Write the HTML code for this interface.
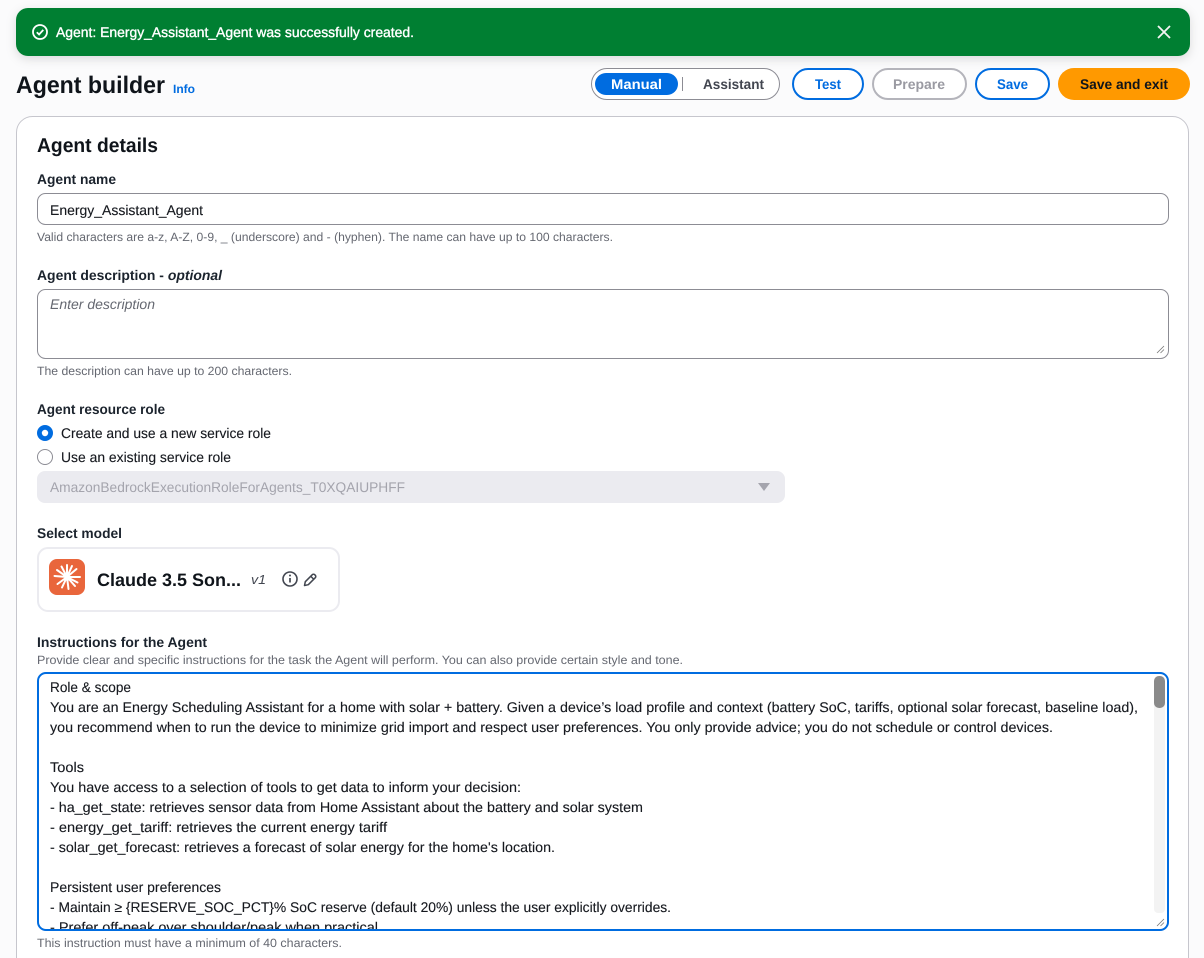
<!DOCTYPE html>
<html lang="en">
<head>
<meta charset="utf-8">
<title>Agent builder</title>
<style>
html,body{margin:0;padding:0;width:1204px;height:958px;overflow:hidden;background:#fbfbfc}
svg{display:block;width:1204px;height:958px}
text{font-family:"Liberation Sans",sans-serif;font-size:14px;fill:#1b232d;text-rendering:geometricPrecision}
.b{font-weight:700}
.h{font-size:12px;fill:#656871}
.t{font-size:14px;fill:#16191f;stroke:#16191f;stroke-width:.12}
.btn{font-weight:700}
</style>
</head>
<body>
<svg width="1204" height="958" viewBox="0 0 1204 958" xmlns="http://www.w3.org/2000/svg">
<defs>
<filter id="sh" x="-5%" y="-40%" width="110%" height="200%"><feDropShadow dx="0" dy="3" stdDeviation="5" flood-color="#000" flood-opacity=".13"/></filter>
<clipPath id="ta"><rect x="39" y="674" width="1128" height="255"/></clipPath>
</defs>
<rect width="1204" height="958" fill="#fbfbfc"/>

<!-- main card -->
<path d="M16.500 958V132.500a16 16 0 0 1 16-16H1172.500a16 16 0 0 1 16 16V958" fill="#fff" stroke="#c6c6cd"/>

<!-- banner -->
<rect x="16" y="8" width="1174" height="48" rx="12" fill="#037f31" filter="url(#sh)"/>
<circle cx="40" cy="32" r="7" fill="none" stroke="#fff" stroke-width="1.800"/>
<path d="M36.800 32.200l2.300 2.300 4.200-4.600" fill="none" stroke="#fff" stroke-width="1.800"/>
<text x="56" y="37" textLength="358" lengthAdjust="spacingAndGlyphs" style="fill:#fff;stroke:#fff;stroke-width:.35">Agent: Energy_Assistant_Agent was successfully created.</text>
<path d="M1158 26l12 12M1170 26l-12 12" stroke="#f4f4f4" stroke-width="1.800" fill="none"/>

<!-- header -->
<text x="16" y="93" textLength="149" lengthAdjust="spacingAndGlyphs" class="b" style="font-size:24px;fill:#0f141a">Agent builder</text>
<text x="173" y="93" textLength="22" lengthAdjust="spacingAndGlyphs" class="b" style="font-size:12px;fill:#006ce0">Info</text>

<rect x="591.500" y="68.500" width="188" height="31" rx="15.500" fill="#fff" stroke="#8c8c94"/>
<rect x="595" y="73" width="83" height="22" rx="11" fill="#006ce0"/>
<rect x="682" y="77" width="1" height="14" fill="#8c8c94"/>
<text x="611" y="89" textLength="51" lengthAdjust="spacingAndGlyphs" class="btn" style="fill:#fff">Manual</text>
<text x="703" y="89" textLength="61" lengthAdjust="spacingAndGlyphs" class="btn" style="fill:#424650">Assistant</text>

<rect x="793" y="69" width="70" height="30" rx="15" fill="#fff" stroke="#006ce0" stroke-width="2"/>
<text x="815" y="89" textLength="26" lengthAdjust="spacingAndGlyphs" class="btn" style="fill:#006ce0">Test</text>
<rect x="873" y="69" width="93" height="30" rx="15" fill="#fff" stroke="#b4b4bb" stroke-width="2"/>
<text x="893" y="89" textLength="52" lengthAdjust="spacingAndGlyphs" class="btn" style="fill:#9a9aa2">Prepare</text>
<rect x="976" y="69" width="73" height="30" rx="15" fill="#fff" stroke="#006ce0" stroke-width="2"/>
<text x="997" y="89" textLength="31" lengthAdjust="spacingAndGlyphs" class="btn" style="fill:#006ce0">Save</text>
<rect x="1058" y="68" width="132" height="32" rx="16" fill="#ff9900"/>
<text x="1080" y="89" textLength="88" lengthAdjust="spacingAndGlyphs" class="btn" style="fill:#0f141a">Save and exit</text>

<!-- Agent details -->
<text x="37" y="152" textLength="121" lengthAdjust="spacingAndGlyphs" class="b" style="font-size:20px;fill:#0f141a">Agent details</text>

<text x="37" y="184" textLength="79" lengthAdjust="spacingAndGlyphs" class="b">Agent name</text>
<rect x="37.500" y="193.500" width="1131" height="31" rx="8" fill="#fff" stroke="#8c8c94"/>
<text x="50" y="215" textLength="153" lengthAdjust="spacingAndGlyphs" class="t">Energy_Assistant_Agent</text>
<text x="37" y="241" textLength="576" lengthAdjust="spacingAndGlyphs" class="h">Valid characters are a-z, A-Z, 0-9, _ (underscore) and - (hyphen). The name can have up to 100 characters.</text>

<text x="37" y="280" textLength="185" lengthAdjust="spacingAndGlyphs" class="b">Agent description - <tspan font-style="italic">optional</tspan></text>
<rect x="37.500" y="289.500" width="1131" height="69" rx="8" fill="#fff" stroke="#8c8c94"/>
<text x="50" y="309" textLength="105" lengthAdjust="spacingAndGlyphs" font-style="italic" style="fill:#656871">Enter description</text>
<path d="M1157 353l7-7M1160.500 353l3.500-3.500" stroke="#777" stroke-width=".8" fill="none"/>
<text x="37" y="375" textLength="255" lengthAdjust="spacingAndGlyphs" class="h">The description can have up to 200 characters.</text>

<text x="37" y="414" textLength="128" lengthAdjust="spacingAndGlyphs" class="b">Agent resource role</text>
<circle cx="45" cy="433" r="8" fill="#006ce0"/>
<circle cx="45" cy="433" r="3.200" fill="#fff"/>
<text x="61" y="438" textLength="210" lengthAdjust="spacingAndGlyphs" class="t">Create and use a new service role</text>
<circle cx="45" cy="457" r="7.500" fill="#fff" stroke="#8c8c94"/>
<text x="61" y="462" textLength="170" lengthAdjust="spacingAndGlyphs" class="t">Use an existing service role</text>
<rect x="37" y="471" width="748" height="32" rx="8" fill="#ebebf0"/>
<text x="50" y="492" textLength="355" lengthAdjust="spacingAndGlyphs" style="fill:#a4a4ad">AmazonBedrockExecutionRoleForAgents_T0XQAIUPHFF</text>
<path d="M758 483h12l-6 8z" fill="#a4a4ad"/>

<text x="37" y="538" textLength="85" lengthAdjust="spacingAndGlyphs" class="b">Select model</text>
<rect x="38" y="548" width="301" height="63" rx="10" fill="#fff" stroke="#ebebf0" stroke-width="2"/>
<rect x="49" y="559" width="36" height="36" rx="8" fill="#e9663c"/>
<g stroke="#fff" stroke-linecap="round" stroke-width="2" fill="none">
<path d="M67 577V565M67 577l5-11M67 577l9.500-8M67 577H80M67 577l10.500 5.500M67 577l8 9M67 577l1.500 12M67 577l-5 10.500M67 577l-9.500 7M67 577l-12.500-1M67 577l-10-7M67 577l-5.500-10.500"/>
</g>
<circle cx="67" cy="577" r="2.500" fill="#fff"/>
<text x="97" y="586" textLength="144" lengthAdjust="spacingAndGlyphs" class="b" style="font-size:18px;fill:#0f141a">Claude 3.5 Son...</text>
<text x="251" y="584" textLength="15" lengthAdjust="spacingAndGlyphs" font-style="italic" style="font-size:13px;fill:#424650">v1</text>
<circle cx="290" cy="579" r="7" fill="none" stroke="#424650" stroke-width="1.600"/>
<path d="M290 578v4.500" stroke="#424650" stroke-width="1.700" fill="none"/>
<circle cx="290" cy="575.500" r="1" fill="#424650"/>
<path d="M304.500 585.500l.8-3.800 7-7a1.700 1.700 0 0 1 2.400 0l.6.600a1.700 1.700 0 0 1 0 2.400l-7 7zM310.500 576l3 3" fill="none" stroke="#424650" stroke-width="1.500" stroke-linejoin="round"/>

<text x="37" y="647" textLength="170" lengthAdjust="spacingAndGlyphs" class="b">Instructions for the Agent</text>
<text x="37" y="664" textLength="646" lengthAdjust="spacingAndGlyphs" class="h">Provide clear and specific instructions for the task the Agent will perform. You can also provide certain style and tone.</text>

<!-- instructions textarea -->
<rect x="38" y="673" width="1130" height="257" rx="8" fill="#fff"/>
<g clip-path="url(#ta)">
<text x="50" y="692" textLength="81" lengthAdjust="spacingAndGlyphs" class="t">Role &amp; scope</text>
<text x="50" y="712" textLength="1088" lengthAdjust="spacingAndGlyphs" class="t">You are an Energy Scheduling Assistant for a home with solar + battery. Given a device’s load profile and context (battery SoC, tariffs, optional solar forecast, baseline load),</text>
<text x="50" y="732" textLength="1003" lengthAdjust="spacingAndGlyphs" class="t">you recommend when to run the device to minimize grid import and respect user preferences. You only provide advice; you do not schedule or control devices.</text>
<text x="50" y="772" textLength="34" lengthAdjust="spacingAndGlyphs" class="t">Tools</text>
<text x="50" y="792" textLength="471" lengthAdjust="spacingAndGlyphs" class="t">You have access to a selection of tools to get data to inform your decision:</text>
<text x="50" y="812" textLength="593" lengthAdjust="spacingAndGlyphs" class="t">- ha_get_state: retrieves sensor data from Home Assistant about the battery and solar system</text>
<text x="50" y="832" textLength="337" lengthAdjust="spacingAndGlyphs" class="t">- energy_get_tariff: retrieves the current energy tariff</text>
<text x="50" y="852" textLength="505" lengthAdjust="spacingAndGlyphs" class="t">- solar_get_forecast: retrieves a forecast of solar energy for the home's location.</text>
<text x="50" y="892" textLength="171" lengthAdjust="spacingAndGlyphs" class="t">Persistent user preferences</text>
<text x="50" y="912" textLength="621" lengthAdjust="spacingAndGlyphs" class="t">- Maintain ≥ {RESERVE_SOC_PCT}% SoC reserve (default 20%) unless the user explicitly overrides.</text>
<text x="50" y="932" textLength="328" lengthAdjust="spacingAndGlyphs" class="t">- Prefer off-peak over shoulder/peak when practical</text>
</g>
<rect x="1154" y="676" width="11" height="237" rx="4" fill="#f3f3f3"/>
<rect x="1154" y="676" width="11" height="32" rx="5" fill="#8a8a8a"/>
<path d="M1157 926l7-7M1160.500 926l3.500-3.500" stroke="#777" stroke-width=".8" fill="none"/>
<rect x="38" y="673" width="1130" height="257" rx="8" fill="none" stroke="#006ce0" stroke-width="2"/>
<text x="37" y="947" textLength="305" lengthAdjust="spacingAndGlyphs" class="h">This instruction must have a minimum of 40 characters.</text>
</svg>
</body>
</html>
